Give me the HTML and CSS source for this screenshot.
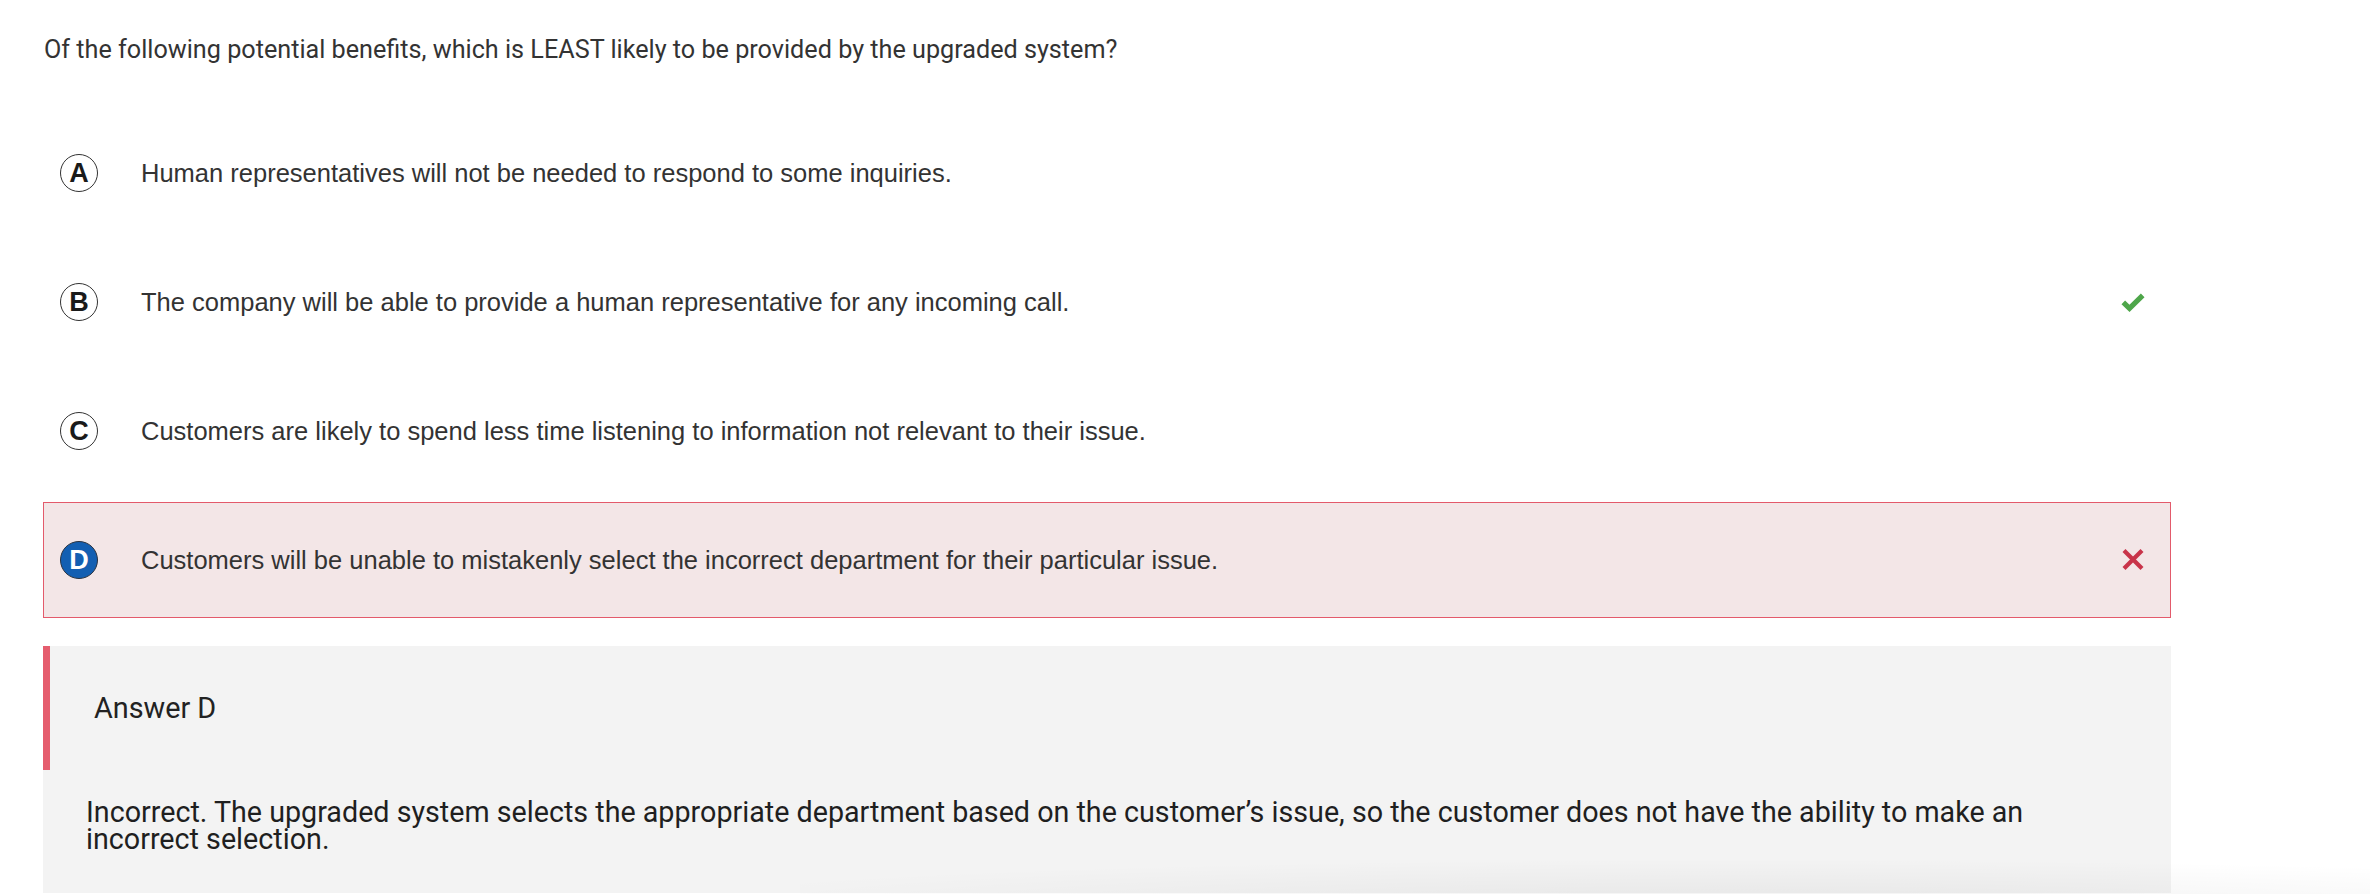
FILE: index.html
```html
<!DOCTYPE html>
<html lang="en">
<head>
<meta charset="utf-8">
<title>Question</title>
<link rel="stylesheet" href="styles.css">
</head>
<body>
<main class="page">
  <p class="question">Of the following potential benefits, which is LEAST likely to be provided by the upgraded system?</p>
  <ul class="options">
    <li class="option">
      <span class="letter">A</span>
      <span class="option-text">Human representatives will not be needed to respond to some inquiries.</span>
    </li>
    <li class="option">
      <span class="letter">B</span>
      <span class="option-text">The company will be able to provide a human representative for any incoming call.</span>
      <svg class="mark" width="24" height="19" viewBox="0 0 24 19"><polyline points="2.3,9.3 8.5,15.3 21.7,2.3" fill="none" stroke="#4ea64a" stroke-width="5.2"/></svg>
    </li>
    <li class="option">
      <span class="letter">C</span>
      <span class="option-text">Customers are likely to spend less time listening to information not relevant to their issue.</span>
    </li>
    <li class="option option-wrong">
      <span class="letter letter-selected">D</span>
      <span class="option-text">Customers will be unable to mistakenly select the incorrect department for their particular issue.</span>
      <svg class="mark" width="24" height="22" viewBox="0 0 24 22"><path d="M3 1.5 L21 19.5 M21 1.5 L3 19.5" fill="none" stroke="#c8344a" stroke-width="4.2"/></svg>
    </li>
  </ul>
  <section class="feedback">
    <div class="feedback-head">Answer D</div>
    <p class="feedback-body">Incorrect. The upgraded system selects the appropriate department based on the customer’s issue, so the customer does not have the ability to make an incorrect selection.</p>
  </section>
</main>
<div class="shade"></div>
</body>
</html>
```
FILE: styles.css
```css
html, body {
  margin: 0;
  padding: 0;
  background: #ffffff;
  overflow: hidden;
}
body {
  width: 2370px;
  height: 894px;
  position: relative;
}
.page {
  width: 2128px;
  padding: 36px 0 0 43px;
}
.question {
  margin: 0 0 0 1px;
  font-family: Roboto, "Liberation Sans", sans-serif;
  font-size: 25.2px;
  line-height: 28px;
  color: #333333;
}
.options {
  list-style: none;
  margin: 51px 0 0 0;
  padding: 0;
  display: flex;
  flex-direction: column;
  gap: 13px;
}
.option {
  height: 114px;
  border: 1px solid transparent;
  display: flex;
  align-items: center;
  padding: 0 0 0 16px;
  position: relative;
}
.option-wrong {
  background: #f3e6e7;
  border-color: #e35a6b;
}
.letter {
  width: 36px;
  height: 36px;
  border: 1.5px solid #333333;
  border-radius: 50%;
  display: flex;
  align-items: center;
  justify-content: center;
  font-family: "Liberation Sans", Arial, sans-serif;
  font-weight: bold;
  font-size: 27px;
  color: #1a1a1a;
  flex: none;
  background: #ffffff;
}
.letter-selected {
  background: #135fb2;
  color: #ffffff;
  border-color: #2a3340;
}
.option-text {
  margin-left: 43px;
  font-family: "Liberation Sans", Arial, sans-serif;
  font-size: 25.5px;
  color: #333333;
  flex: 1;
}
.mark {
  flex: none;
  margin-right: 25px;
}
.feedback {
  margin-top: 28px;
  background: #f3f3f3;
  height: 247px;
}
.feedback-head {
  height: 124px;
  border-left: 7px solid #e55d6e;
  display: flex;
  align-items: center;
  padding-left: 44px;
  font-family: Roboto, "Liberation Sans", sans-serif;
  font-size: 28.8px;
  color: #222222;
}
.feedback-body {
  margin: 0;
  padding: 29px 43px 0 43px;
  font-family: Roboto, "Liberation Sans", sans-serif;
  font-size: 28.7px;
  line-height: 27px;
  color: #1f1f1f;
}
.shade {
  position: absolute;
  left: 800px;
  right: 0;
  top: 850px;
  height: 44px;
  background: radial-gradient(ellipse 70% 100% at 60% 120%, rgba(0,0,0,0.05), rgba(0,0,0,0) 100%);
}
```
